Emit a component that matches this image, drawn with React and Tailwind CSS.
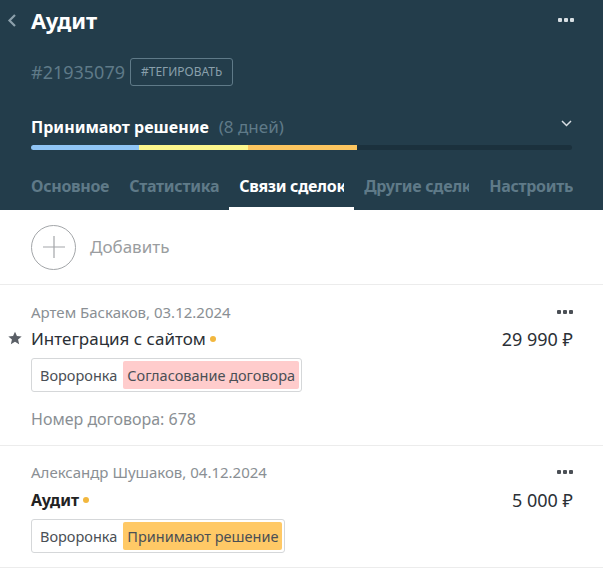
import React from "react";

const Dots = ({ className }) => (
  <div className={`flex gap-[2px] ${className}`}>
    <span className="w-[4px] h-[4px] rounded-[1px] bg-current" />
    <span className="w-[4px] h-[4px] rounded-[1px] bg-current" />
    <span className="w-[4px] h-[4px] rounded-[1px] bg-current" />
  </div>
);

const tabs = ["Основное", "Статистика", "Связи сделок", "Другие сделки", "Настроить"];

const Pipeline = ({ stage, stageClass, className }) => (
  <div className={`inline-flex items-center border border-[#d5d7d9] rounded-[3px] p-[2px] text-[14.5px] leading-[20px] text-[#4a4f55] ${className}`}>
    <span className="px-[6px]">Вороронка</span>
    <span className={`px-[4px] h-[28px] flex items-center rounded-[2px] ${stageClass}`}>{stage}</span>
  </div>
);

const LeadCard = ({ author, title, bold, price, star, stage, stageClass, extra, top, gap }) => (
  <div className={`border-b border-[#ececec] pl-[31px] pr-[30px] pb-[14px] ${top}`}>
    <div className="flex items-center justify-between h-[20px]">
      <span className="text-[15px] text-[#8a8f94]">{author}</span>
      <Dots className="text-[#4a4f55]" />
    </div>
    <div className={`flex items-center justify-between h-[24px] ${gap}`}>
      <div className="relative flex items-center">
        {star && (
          <svg className="absolute left-[-24px] top-[4px]" width="16" height="16" viewBox="0 0 24 24">
            <path fill="#5a5f66" d="M12 2.5l2.9 6.6 7.1.6-5.4 4.7 1.6 7-6.2-3.7-6.2 3.7 1.6-7L2 9.7l7.1-.6z" />
          </svg>
        )}
        <span className={`${bold ? "text-[16px] font-bold text-[#222]" : "text-[17px] text-[#2b3036]"}`}>{title}</span>
        <span className="ml-[4px] w-[6px] h-[6px] rounded-full bg-[#f2b73e]" />
      </div>
      <span className="text-[18px] text-[#2b3036]">{price}</span>
    </div>
    <Pipeline stage={stage} stageClass={stageClass} className="mt-[7px]" />
    {extra && <div className="mt-[15px] h-[24px] flex items-center text-[16px] text-[#8a8f94]">{extra}</div>}
  </div>
);

export default function App() {
  return (
    <div className="w-[603px] h-[575px] overflow-hidden bg-white" style={{ fontFamily: '"Noto Sans", sans-serif' }}>
      <div className="bg-[#233d4b]">
        <div className="relative flex items-center justify-between pl-[31px] pr-[29px] h-[40px]">
          <svg className="absolute left-[7px] top-[14px]" width="10" height="13" viewBox="0 0 10 13">
            <path d="M8 1L2.5 6.5 8 12" stroke="#8ca0ab" strokeWidth="2.2" fill="none" />
          </svg>
          <h1 className="text-[22px] font-bold text-white leading-none">Аудит</h1>
          <Dots className="text-[#d8dfe3]" />
        </div>
        <div className="flex items-center gap-[5px] pl-[31px] mt-[18px] h-[28px]">
          <span className="text-[18px] text-[#5f7a88]">#21935079</span>
          <span className="border border-[#5f7a88] rounded-[3px] px-[10px] h-[28px] flex items-center text-[12px] text-[#8aa0ac]">#ТЕГИРОВАТЬ</span>
        </div>
        <div className="flex items-center justify-between pl-[31px] pr-[31px] mt-[29px] h-[24px]">
          <div className="flex items-baseline gap-[10px]">
            <span className="text-[16px] font-bold text-white">Принимают решение</span>
            <span className="text-[17px] text-[#5f7a88]">(8 дней)</span>
          </div>
          <svg width="11" height="7" viewBox="0 0 11 7" className="mb-[8px]">
            <path d="M1 1l4.5 4.5L10 1" stroke="#d8dfe3" strokeWidth="1.5" fill="none" />
          </svg>
        </div>
        <div className="mx-[31px] mt-[6px] h-[5px] rounded-full bg-[#1b313d] flex overflow-hidden">
          <div className="w-[108px] bg-[#8fc5f5]" />
          <div className="w-[109px] bg-[#fcf68c]" />
          <div className="w-[109px] bg-[#fbc55f]" />
        </div>
        <div className="flex mt-[24px] pl-[21px] text-[16px] tracking-[-0.3px] leading-[24px] font-bold text-[#5f7a88]">
          {tabs.map((t, i) => (
            <div
              key={t}
              className={`px-[10px] pb-[9px] border-b-[3px] ${i === 2 ? "text-white border-white" : "border-transparent"}`}
            >
              <div className="max-w-[105px] whitespace-nowrap overflow-hidden">{t}</div>
            </div>
          ))}
        </div>
      </div>
      <div className="flex items-center h-[75px] pl-[31px] border-b border-[#ececec]">
        <div className="w-[45px] h-[45px] rounded-full border border-[#a3a6a9] flex items-center justify-center">
          <svg width="22" height="22" viewBox="0 0 22 22">
            <path d="M11 0v22M0 11h22" stroke="#a3a6a9" strokeWidth="1.2" />
          </svg>
        </div>
        <span className="ml-[14px] text-[17px] text-[#9a9da0]">Добавить</span>
      </div>
      <LeadCard
        top="pt-[17px]"
        gap="mt-[5px]"
        author="Артем Баскаков, 03.12.2024"
        title="Интеграция с сайтом"
        price="29 990 ₽"
        star
        stage="Согласование договора"
        stageClass="bg-[#ffcccc]"
        extra="Номер договора: 678"
      />
      <LeadCard
        top="pt-[16px]"
        gap="mt-[6px]"
        author="Александр Шушаков, 04.12.2024"
        title="Аудит"
        bold
        price="5 000 ₽"
        stage="Принимают решение"
        stageClass="bg-[#ffc966]"
      />
    </div>
  );
}
